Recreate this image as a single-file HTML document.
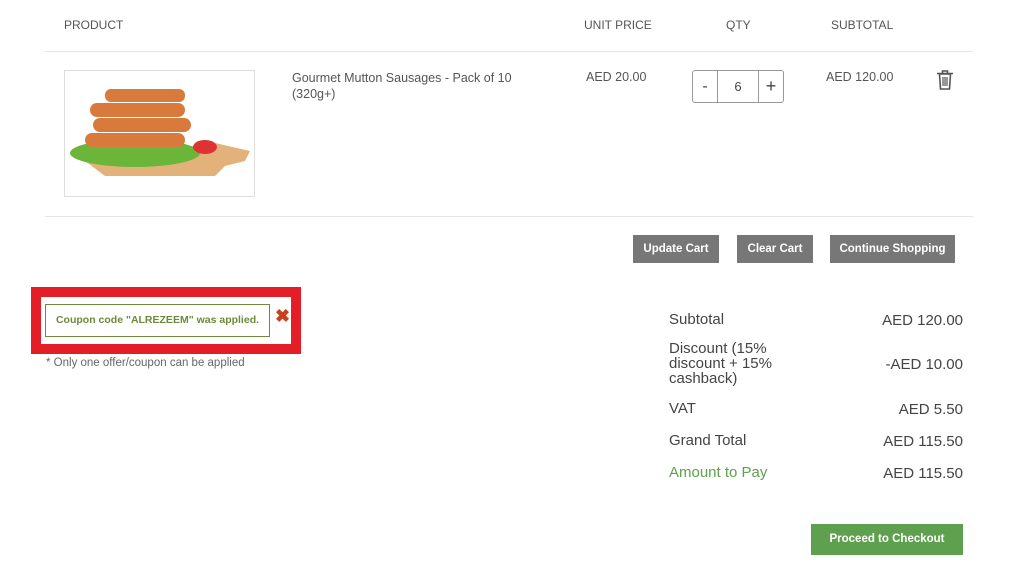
<!DOCTYPE html>
<html><head><style>
*{margin:0;padding:0;box-sizing:border-box}
body{width:1012px;height:564px;background:#fff;font-family:"Liberation Sans",sans-serif;color:#555;position:relative;overflow:hidden}
.a{position:absolute;white-space:nowrap}
.h{font-size:12px;color:#555;top:18px}
.btn{position:absolute;background:#777;color:#fff;font-size:11.5px;font-weight:bold;height:28px;line-height:28px;text-align:center;top:235px}
.r{font-size:15px;color:#444}
</style></head><body>
<div class="a h" style="left:64px">PRODUCT</div>
<div class="a h" style="left:584px">UNIT PRICE</div>
<div class="a h" style="left:726px">QTY</div>
<div class="a h" style="left:831px">SUBTOTAL</div>
<div class="a" style="left:45px;top:51px;width:928px;border-top:1px solid #e5e5e5"></div>
<div class="a" style="left:64px;top:70px;width:191px;height:127px;border:1px solid #ddd;overflow:hidden">
<svg width="191" height="127"><path d="M20 90 L150 72 L185 80 L180 90 L160 95 L150 105 L40 105 Z" fill="#e2b27a"/><ellipse cx="70" cy="82" rx="65" ry="14" fill="#6bb53a"/><g fill="#d77a3c"><rect x="40" y="18" width="80" height="13" rx="6"/><rect x="25" y="32" width="95" height="14" rx="7"/><rect x="28" y="47" width="98" height="14" rx="7"/><rect x="20" y="62" width="100" height="14" rx="7"/></g><ellipse cx="140" cy="76" rx="12" ry="7" fill="#d33"/></svg></div>
<div class="a" style="left:292px;top:70px;font-size:12.5px;line-height:16px;color:#555">Gourmet Mutton Sausages - Pack of 10<br>(320g+)</div>
<div class="a" style="left:586px;top:70px;font-size:12.5px">AED 20.00</div>
<div class="a" style="left:692px;top:70px;width:92px;height:33px;border:1px solid #999;border-radius:3px;display:flex;font-size:16px;color:#444">
<div style="width:25px;text-align:center;line-height:31px;border-right:1px solid #999">-</div>
<div style="width:41px;text-align:center;line-height:31px;border-right:1px solid #999;font-size:13px">6</div>
<div style="flex:1;text-align:center;line-height:31px;font-size:18px">+</div></div>
<div class="a" style="left:826px;top:70px;font-size:12.5px">AED 120.00</div>
<svg class="a" style="left:936px;top:69px" width="18" height="22" viewBox="0 0 18 22"><path d="M1 4.5h16M6.5 4V2h5v2M3.5 5l1 15h9l1-15Z" stroke="#555" stroke-width="1.6" fill="none"/><path d="M7 8v9M9 8v9M11 8v9" stroke="#555" stroke-width="1.2"/></svg>
<div class="a" style="left:45px;top:216px;width:928px;border-top:1px solid #e5e5e5"></div>
<div class="btn" style="left:633px;width:86px">Update Cart</div>
<div class="btn" style="left:737px;width:76px">Clear Cart</div>
<div class="btn" style="left:830px;width:125px">Continue Shopping</div>
<div class="a" style="left:31px;top:287px;width:270px;height:67px;border:10px solid #e41e26"></div>
<div class="a" style="left:45px;top:304px;width:225px;height:33px;border:1px solid #6d8a3a;color:#6d8a3a;font-size:10.5px;font-weight:bold;line-height:31px;text-align:center">Coupon code "ALREZEEM" was applied.</div>
<div class="a" style="left:275px;top:306px;color:#c9401c;font-size:18px;font-weight:bold">✖</div>
<div class="a" style="left:46px;top:357px;font-size:11.5px;color:#666">* Only one offer/coupon can be applied</div>
<div class="a r" style="left:669px;top:311px">Subtotal</div><div class="a r" style="right:49px;top:312px">AED 120.00</div>
<div class="a r" style="left:669px;top:341px;line-height:15px">Discount (15%<br>discount + 15%<br>cashback)</div><div class="a r" style="right:49px;top:356px">-AED 10.00</div>
<div class="a r" style="left:669px;top:400px">VAT</div><div class="a r" style="right:49px;top:401px">AED 5.50</div>
<div class="a r" style="left:669px;top:432px">Grand Total</div><div class="a r" style="right:49px;top:433px">AED 115.50</div>
<div class="a r" style="left:669px;top:464px;color:#5fa04e">Amount to Pay</div><div class="a r" style="right:49px;top:465px">AED 115.50</div>
<div class="a" style="left:811px;top:524px;width:152px;height:31px;background:#5fa04e;color:#fff;font-size:11.5px;font-weight:bold;line-height:31px;text-align:center">Proceed to Checkout</div>
</body></html>
